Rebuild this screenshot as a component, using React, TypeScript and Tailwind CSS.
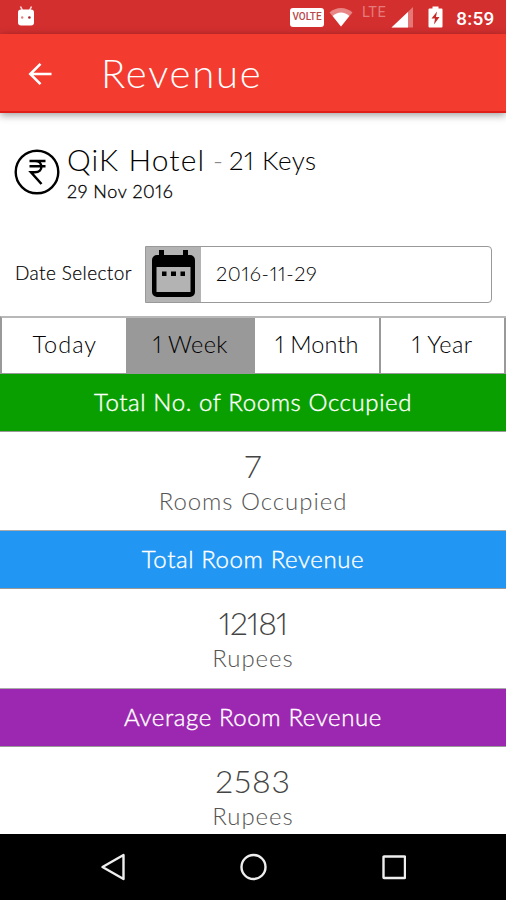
import React, { useState } from 'react';

const tabs = [
  { label: 'Today', width: 'w-[126px]', text: 'tracking-[1px] pl-[2px]' },
  { label: '1 Week', width: 'w-[128px]', text: 'tracking-[0.3px]' },
  { label: '1 Month', width: 'w-[126px]', text: 'tracking-[0.1px]' },
  { label: '1 Year', width: 'w-[126px]', text: 'tracking-[0.5px]' },
];

const stats = [
  { title: 'Total No. of Rooms Occupied', value: '7', unit: 'Rooms Occupied', color: 'bg-[#0a9f00]', height: 'h-[99px]', text: 'tracking-[0.5px]' },
  { title: 'Total Room Revenue', value: '12181', unit: 'Rupees', color: 'bg-[#2196f3]', height: 'h-[100px]', text: 'tracking-[-0.8px]' },
  { title: 'Average Room Revenue', value: '2583', unit: 'Rupees', color: 'bg-[#9c27b0]', height: 'h-[99px]', text: 'tracking-[0.8px]' },
];

const StatusBar = () => (
  <div className="flex h-[34px] shrink-0 items-center bg-[#d32f2f] text-white">
    <svg className="ml-[17px]" width="18" height="22" viewBox="0 0 18 22">
      <path d="M3.5 0.5l2 4M14.5 0.5l-2 4" stroke="#fbd9d9" strokeWidth="1.6" />
      <rect x="1" y="3.500" width="16" height="16" rx="3" fill="#fff" />
      <circle cx="5.2" cy="11.500" r="1.2" fill="#e58080" />
      <circle cx="12.4" cy="11.500" r="1.3" fill="#a8242a" />
    </svg>
    <div className="ml-auto flex h-[19px] w-[34px] items-center justify-center rounded-[3px] bg-white font-['Roboto'] text-[10px] leading-none font-medium text-[#b8494b]">
      VOLTE
    </div>
    <svg className="ml-[5px]" width="24" height="20" viewBox="0 0 24 20">
      <path d="M0.5 5.5C7 -0.6 17 -0.6 23.5 5.5L12 19.5z" fill="#e88585" />
      <path d="M3.7 9C8.5 4.3 15.5 4.3 20.3 9L12 19.5z" fill="#fff" />
    </svg>
    <span className="mb-[8px] ml-[9px] w-[25px] font-['Roboto'] text-[14.5px] leading-none font-normal tracking-[0.5px] text-[#e57b7b]">LTE</span>
    <svg className="ml-[4px]" width="23" height="21" viewBox="0 0 23 21">
      <path d="M0.5 20.5L22 0v20.5z" fill="#e57777" />
      <path d="M0.5 20.5L17 5v15.500z" fill="#fff" />
    </svg>
    <svg className="ml-[14px]" width="15" height="22" viewBox="0 0 15 22">
      <path d="M1.500 2.500h3V0.500h6v2h3a1 1 0 0 1 1 1v17a1 1 0 0 1-1 1h-12a1 1 0 0 1-1-1v-17a1 1 0 0 1 1-1z" fill="#fff" />
      <path d="M9 5.500L3.500 12.500H7L6 18.500L11.500 11H8z" fill="#c62b2b" />
    </svg>
    <span className="mr-[11px] ml-[13px] w-[39px] pt-[3px] font-['Roboto'] text-[19px] leading-none font-medium tracking-[0.2px]">8:59</span>
  </div>
);

const RevenuePage = () => {
  const [period, setPeriod] = useState('1 Week');

  return (
    <div className="flex h-[900px] w-[506px] flex-col overflow-hidden bg-white font-['Lato',sans-serif] font-light text-black proportional-nums">
      <StatusBar />

      <header className="relative flex h-[79px] shrink-0 items-center border-b-2 border-[#e01f1a] bg-[#f43b30] text-white shadow-[0_2px_8px_rgba(0,0,0,0.4)]">
        <svg className="mt-[2px] ml-[28px]" width="25" height="24" viewBox="0 0 25 24">
          <path d="M23.500 12H2.500M12.500 1.800L2.300 12l10.200 10.200" fill="none" stroke="#fff" strokeWidth="2.600" />
        </svg>
        <h1 className="ml-[48px] text-[40px] leading-none tracking-[1.8px]">Revenue</h1>
      </header>

      <section className="flex h-[133px] shrink-0 pt-[32px] pl-[14px]">
        <svg className="mt-[4px]" width="46" height="46" viewBox="0 0 46 46" fill="none" stroke="#000">
          <circle cx="23" cy="23" r="21.300" strokeWidth="2.400" />
          <path d="M15.500 12H31.500M15.500 17.300H31.500M16 12h5c8.500 0 8.500 11.300 0 11.300h-4L27.500 35" strokeWidth="2.500" />
        </svg>
        <div className="-mt-[4px] ml-[7px]">
          <div className="flex h-[32px] items-baseline">
            <span className="text-[30px] leading-[32px] tracking-[1.1px]">QiK Hotel</span>
            <span className="ml-[8px] text-[27px] text-[#888]">-</span>
            <span className="relative -top-px ml-[6px] text-[26px] tracking-[0.5px]">21 Keys</span>
          </div>
          <p className="mt-[7px] text-[18px] leading-[22px] tracking-[0.6px] [-webkit-text-stroke:0.3px]">29 Nov 2016</p>
        </div>
      </section>

      <div className="flex h-[56px] shrink-0 items-center">
        <label className="-mt-px ml-[15px] w-[130px] text-[19px] tracking-[0.4px] [-webkit-text-stroke:0.2px]">Date Selector</label>
        <div className="flex h-[57px] w-[347px] items-stretch overflow-hidden rounded-r-[4px] border border-[#999] bg-white">
          <div className="flex w-[55px] items-center justify-center bg-[#b3b3b3]">
            <svg width="43" height="49" viewBox="0 0 43 49">
              <path d="M7 0h5v5h19V0h5v5h2a5 5 0 0 1 5 5v32a5 5 0 0 1-5 5H5a5 5 0 0 1-5-5V10a5 5 0 0 1 5-5h2z" />
              <path d="M4.500 17h34v25h-34z" fill="#b3b3b3" />
              <path d="M10 21.500h4.500v4.500H10zM19 21.500h5v4.500h-5zM28.500 21.500h4.500v4.500h-4.500z" />
            </svg>
          </div>
          <span className="flex items-center pb-[2px] pl-[15px] text-[20px] tracking-[0.7px]">2016-11-29</span>
        </div>
      </div>

      <div className="mt-[14px] flex h-[58px] shrink-0 border-t-2 border-l-2 border-t-[#b8b8b8] border-l-[#999]">
        {tabs.map((tab) => (
          <button
            key={tab.label}
            onClick={() => setPeriod(tab.label)}
            className={`${tab.width} ${tab.text} border-r-2 border-b border-[#999] pb-[2px] text-[23.5px] ${
              period === tab.label ? 'bg-[#999]' : 'bg-white'
            }`}
          >
            {tab.label}
          </button>
        ))}
      </div>

      <main className="h-[460px] shrink-0 overflow-hidden">
        {stats.map((stat) => (
          <div key={stat.title} className="text-center">
            <h2 className={`${stat.color} h-[58px] border-b border-[#999] text-[24px] leading-[56px] tracking-[0.6px] text-white [-webkit-text-stroke:0.4px]`}>
              {stat.title}
            </h2>
            <div className={`${stat.height} border-b border-[#aaa] pt-[16px] text-[#444]`}>
              <p className={`${stat.text} text-[32px] leading-[36px]`}>{stat.value}</p>
              <p className="text-[24px] leading-[34px] tracking-[0.95px] text-[#555]">{stat.unit}</p>
            </div>
          </div>
        ))}
      </main>

      <nav className="flex h-[66px] shrink-0 items-center bg-black">
        <svg className="ml-[100px]" width="306" height="30" viewBox="0 0 306 30" fill="none" stroke="#eee" strokeWidth="2.400">
          <path d="M2.500 15L23.500 3v24z" strokeLinejoin="round" />
          <circle cx="153.500" cy="15" r="12" />
          <rect x="283.500" y="4.500" width="21.500" height="21.500" rx="0.500" />
        </svg>
      </nav>
    </div>
  );
};

export default RevenuePage;
